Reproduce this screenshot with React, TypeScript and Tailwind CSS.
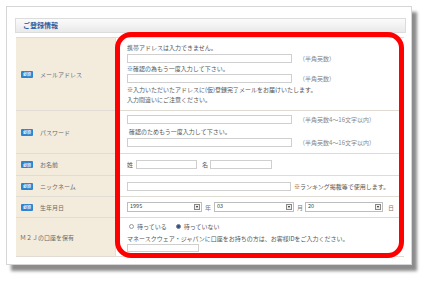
import React from 'react';

// small helpers for the form pieces
function Badge() {
  return (
    <span className="inline-flex items-center justify-center w-[12px] h-[7px] rounded-[1px] bg-[#2f84cf] text-white text-[4px] leading-none font-bold mr-[7px]">
      必須
    </span>
  );
}

function Field({ w }: { w: number }) {
  return <div className="h-[9px] border border-[#cfcfcf] bg-white shrink-0" style={{ width: w }} />;
}

function Select({ w, value }: { w: number; value: string }) {
  return (
    <div className="h-[10px] border border-[#bdbdbd] bg-white flex items-center justify-between shrink-0 pl-[2px] pr-[1px]" style={{ width: w }}>
      <span className="text-[5.5px] leading-none text-[#444]">{value}</span>
      <span className="w-[6px] h-[6px] border border-[#888] bg-[#eee] flex items-center justify-center">
        <span className="w-0 h-0 border-l-[1.5px] border-r-[1.5px] border-t-[2px] border-l-transparent border-r-transparent border-t-[#222]" />
      </span>
    </div>
  );
}

function Row({ label, badge = true, h, children, pad }: { label: string; badge?: boolean; h: number; children: React.ReactNode; pad: string }) {
  return (
    <div className="flex border-b border-[#e0dcd3]" style={{ height: h }}>
      <div className={`w-[100px] bg-[#f3ecdc] flex items-center ${badge ? 'pl-[5px]' : 'pl-[4px]'} border-r border-[#e6e0d2]`}>
        {badge && <Badge />}
        <span className="text-[6px] text-[#6a6a6a]">{label}</span>
      </div>
      <div className={`flex-1 pl-[11px] flex flex-col ${pad}`}>{children}</div>
    </div>
  );
}

export default function App() {
  return (
    <div className="relative w-[426px] h-[283px] bg-white overflow-hidden font-['Noto_Sans_CJK_JP',sans-serif] text-[#555]">
      <div className="mt-[6px] ml-[6px] w-[406px] h-[259px] bg-white border border-[#d6d6d6] shadow-[5px_6px_3px_rgba(0,0,0,0.45)] pl-[8px] pt-[11px]">
        <div className="w-[391px] h-[15px] border border-[#dcdcdc] bg-gradient-to-b from-[#fbfbfb] to-[#e9e9e9] flex items-center pl-[7px]">
          <span className="text-[7px] font-bold text-[#2d5fa3]">ご登録情報</span>
        </div>

        <div className="ml-[1px] mt-[4px] w-[388px] border-t border-[#e0dcd3]">
          <Row label="メールアドレス" h={73} pad="pt-[5px]">
            <div className="text-[6px] leading-[10px]">携帯アドレスは入力できません。</div>
            <div className="flex items-center mt-[1px]">
              <Field w={165} />
              <span className="ml-[7px] text-[6px] text-[#888]">（半角英数）</span>
            </div>
            <div className="text-[6px] leading-[10px] mt-[1px]">※確認の為もう一度入力して下さい。</div>
            <div className="flex items-center">
              <Field w={165} />
              <span className="ml-[7px] text-[6px] text-[#888]">（半角英数）</span>
            </div>
            <div className="text-[6px] leading-[10px] mt-[2px]">※入力いただいたアドレスに(仮)登録完了メールをお届けいたします。</div>
            <div className="text-[6px] leading-[9px]">入力間違いにご注意ください。</div>
          </Row>

          <Row label="パスワード" h={43} pad="pt-[4px]">
            <div className="flex items-center">
              <Field w={165} />
              <span className="ml-[7px] text-[6px] text-[#888]">（半角英数4～16文字以内）</span>
            </div>
            <div className="text-[6px] leading-[10px] mt-[3px] pl-[2px]">確認のためもう一度入力して下さい。</div>
            <div className="flex items-center mt-[1px]">
              <Field w={165} />
              <span className="ml-[7px] text-[6px] text-[#888]">（半角英数4～16文字以内）</span>
            </div>
          </Row>

          <Row label="お名前" h={22} pad="justify-center">
            <div className="flex items-center">
              <span className="text-[6px] mr-[3px]">姓</span>
              <Field w={61} />
              <span className="text-[6px] ml-[5px] mr-[2px]">名</span>
              <Field w={62} />
            </div>
          </Row>

          <Row label="ニックネーム" h={21} pad="justify-center">
            <div className="flex items-center">
              <Field w={164} />
              <span className="ml-[3px] text-[6px]">※ランキング掲載等で使用します。</span>
            </div>
          </Row>

          <Row label="生年月日" h={21} pad="justify-center">
            <div className="flex items-center">
              <Select w={75} value="1995" />
              <span className="text-[6px] mx-[3px] text-[#777]">年</span>
              <Select w={80} value="03" />
              <span className="text-[6px] ml-[3px] mr-[2px] text-[#777]">月</span>
              <Select w={78} value="20" />
              <span className="text-[6px] ml-[5px] text-[#777]">日</span>
            </div>
          </Row>

          <Row label="Ｍ２Ｊの口座を保有" badge={false} h={39} pad="pt-[3px]">
            <div className="flex items-center h-[10px] text-[6px]">
              <span className="w-[5px] h-[5px] rounded-full border border-[#999] bg-white ml-[2px] mr-[3px]" />
              <span>待っている</span>
              <span className="w-[5px] h-[5px] rounded-full border border-[#6d7c99] bg-[#34508a] ml-[9px] mr-[3px]" />
              <span>待っていない</span>
            </div>
            <div className="text-[6px] leading-[10px] mt-[3px]">マネースクウェア・ジャパンに口座をお持ちの方は、お客様IDをご入力ください。</div>
            <div className="h-[8px] w-[72px] border border-[#cfcfcf] bg-white" />
          </Row>
        </div>
      </div>

      {/* red highlight drawn over the form */}
      <div className="absolute left-[115px] top-[32px] w-[289px] h-[226px] border-[5px] border-[#ff0000] rounded-[16px]" />
    </div>
  );
}
